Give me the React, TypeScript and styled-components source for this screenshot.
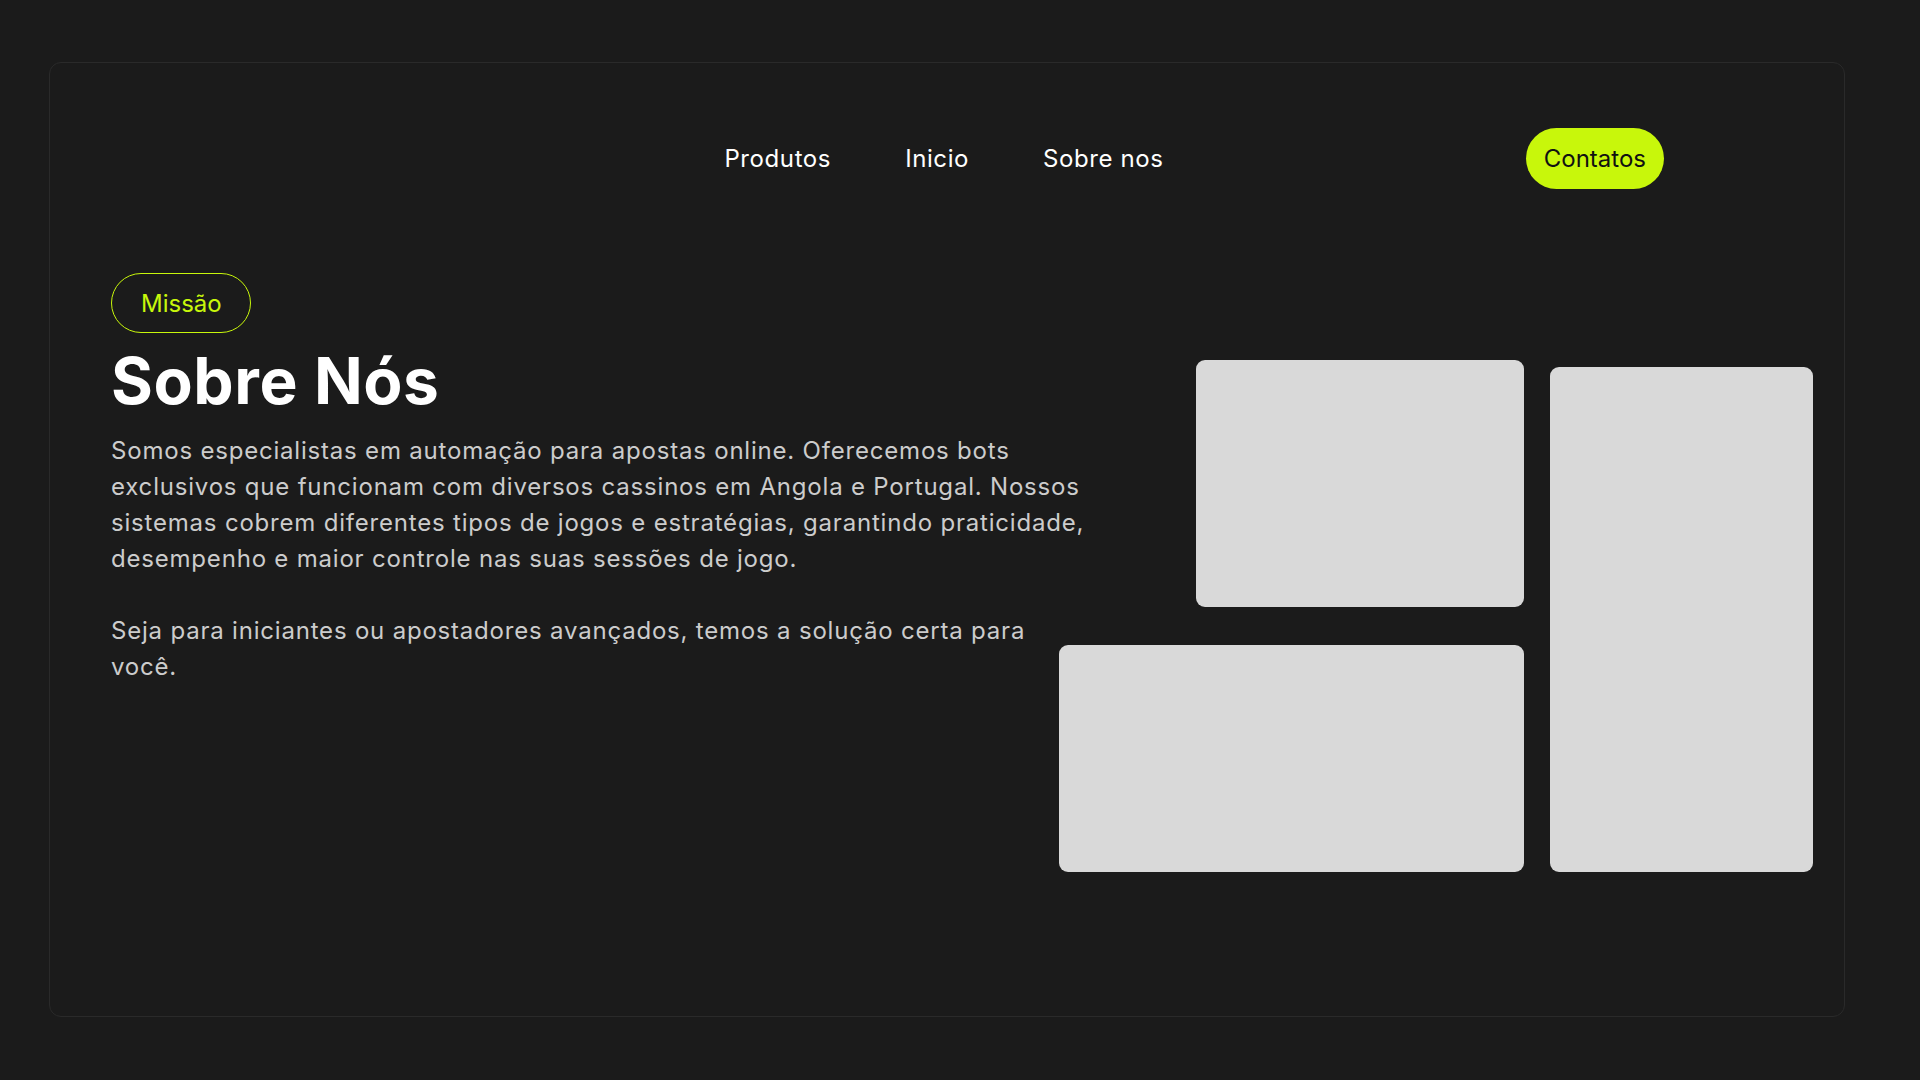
import React from "react";
import styled, { createGlobalStyle } from "styled-components";

const GlobalStyle = createGlobalStyle`
  html, body {
    margin: 0;
    padding: 0;
    background: #1b1b1b;
  }
  * { box-sizing: border-box; }
`;

const LIME = "#c8f70b";

const Page = styled.div`
  width: 1920px;
  height: 1080px;
  padding: 62px 75px 0 49px;
  background: #1b1b1b;
  font-family: Inter, "Open Sans", sans-serif;
`;

const Card = styled.section`
  height: 955px;
  border: 1px solid #2a2a2a;
  border-radius: 12px;
  background: #1b1b1b;
  display: flex;
  flex-direction: column;
`;

const Header = styled.header`
  display: grid;
  grid-template-columns: 1fr auto 1fr;
  align-items: center;
  padding-top: 65px;
  height: 126px;
`;

const Nav = styled.nav`
  grid-column: 2;
  display: flex;
  gap: 74px;
  align-items: center;
  margin-right: 6px;
`;

const NavLink = styled.a`
  color: #ffffff;
  font-size: 24px;
  font-weight: 400;
  letter-spacing: 0.6px;
  text-decoration: none;
  line-height: 1;
  cursor: pointer;
`;

const ContactButton = styled.button`
  grid-column: 3;
  justify-self: end;
  margin-right: 180px;
  height: 61px;
  padding: 0 18px;
  border: none;
  border-radius: 31px;
  background: ${LIME};
  color: #111111;
  font-family: Inter, sans-serif;
  font-size: 24px;
  font-weight: 400;
  cursor: pointer;
`;

const Hero = styled.div`
  display: flex;
  align-items: flex-start;
  padding: 84px 31px 0 61px;
`;

const TextColumn = styled.div`
  flex: 1;
  display: flex;
  flex-direction: column;
  align-items: flex-start;
`;

const Tag = styled.span`
  display: inline-flex;
  align-items: center;
  height: 60px;
  padding: 0 28px 0 29px;
  border: 1px solid ${LIME};
  border-radius: 30px;
  color: ${LIME};
  font-size: 24px;
  font-weight: 400;
`;

const Title = styled.h1`
  margin: 10px 0 0;
  color: #ffffff;
  font-size: 64px;
  font-weight: 700;
  line-height: 1.2;
  letter-spacing: 0.6px;
`;

const Body = styled.div`
  margin-top: 13px;
  max-width: 980px;
  color: #cccccc;
  font-size: 24px;
  line-height: 36px;
  font-weight: 400;
  letter-spacing: 0.8px;
`;

const Paragraph = styled.p`
  margin: 0 0 36px;
`;

const Gallery = styled.div`
  display: flex;
  gap: 26px;
  margin-top: 87px;
`;

const GalleryStack = styled.div`
  width: 328px;
  display: flex;
  flex-direction: column;
  gap: 38px;
`;

const Tile = styled.div<{ $w: number; $h: number; $shift?: number; $top?: number }>`
  flex-shrink: 0;
  width: ${(p) => p.$w}px;
  height: ${(p) => p.$h}px;
  margin-left: ${(p) => -(p.$shift ?? 0)}px;
  margin-top: ${(p) => p.$top ?? 0}px;
  background: #d9d9d9;
  border-radius: 9px;
`;

export default function App() {
  return (
    <>
      <GlobalStyle />
      <Page>
        <Card>
          <Header>
            <Nav>
              <NavLink>Produtos</NavLink>
              <NavLink>Inicio</NavLink>
              <NavLink>Sobre nos</NavLink>
            </Nav>
            <ContactButton>Contatos</ContactButton>
          </Header>
          <Hero>
            <TextColumn>
              <Tag>Missão</Tag>
              <Title>Sobre Nós</Title>
              <Body>
                <Paragraph>
                  Somos especialistas em automação para apostas online. Oferecemos bots
                  exclusivos que funcionam com diversos cassinos em Angola e Portugal. Nossos
                  sistemas cobrem diferentes tipos de jogos e estratégias, garantindo praticidade,
                  desempenho e maior controle nas suas sessões de jogo.
                </Paragraph>
                <Paragraph>
                  Seja para iniciantes ou apostadores avançados, temos a solução certa para
                  você.
                </Paragraph>
              </Body>
            </TextColumn>
            <Gallery>
              <GalleryStack>
                <Tile $w={328} $h={247} />
                <Tile $w={465} $h={227} $shift={137} />
              </GalleryStack>
              <Tile $w={263} $h={505} $top={7} />
            </Gallery>
          </Hero>
        </Card>
      </Page>
    </>
  );
}
